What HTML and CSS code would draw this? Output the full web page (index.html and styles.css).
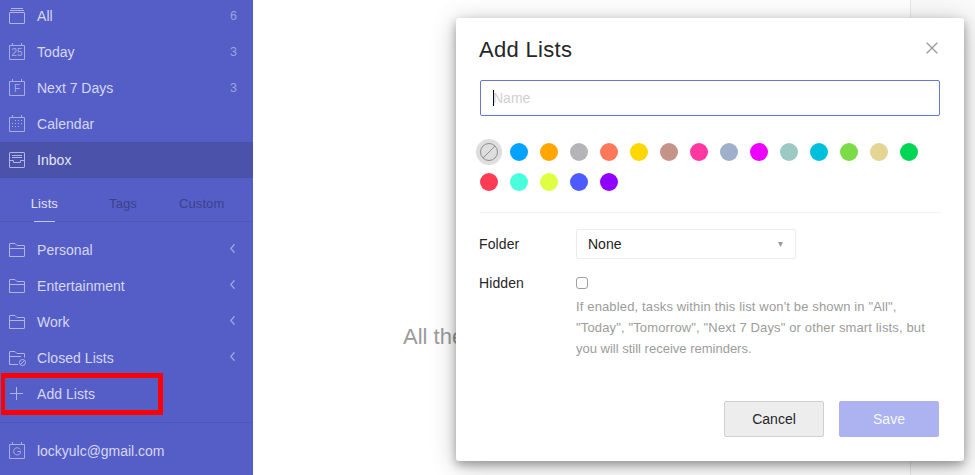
FILE: index.html
```html
<!DOCTYPE html>
<html lang="en">
<head>
<meta charset="utf-8">
<title>Lists</title>
<link rel="stylesheet" href="styles.css">
</head>
<body>
<svg class="defs" width="0" height="0">
  <symbol id="folder" viewBox="0 0 16 16"><path d="M.5 14.500V2q0-.5.5-.5h5l2 2h7q.5 0 .5.5v10q0 .5-.5.5H1q-.5 0-.5-.5M.5 6.500h15"/></symbol>
  <symbol id="cal" viewBox="0 0 16 17"><path d="M.5 2.500h15v14H.5zM3.500 0v2.500M12.500 0v2.500"/></symbol>
  <symbol id="chev" viewBox="0 0 5 9"><path d="M4.500.3.700 4.500l3.800 4.200"/></symbol>
</svg>
<div class="app">
  <aside class="sidebar">
    <nav class="smart">
      <a class="row"><svg class="icon" viewBox="0 0 16 16"><path d="M2 .5h12M1 2.500h14M1 4.500h14q.5 0 .5.5v10q0 .5-.5.5H1q-.5 0-.5-.5V5q0-.5.5-.5"/></svg><span class="label">All</span><span class="count">6</span></a>
      <a class="row"><span class="cal"><svg><use href="#cal"/></svg><b>25</b></span><span class="label">Today</span><span class="count">3</span></a>
      <a class="row"><span class="cal"><svg><use href="#cal"/></svg><b>F</b></span><span class="label next">Next 7 Days</span><span class="count">3</span></a>
      <a class="row"><span class="cal"><svg><use href="#cal"/><path class="dots" d="M6 5.500h8M3 8.500h11M3 11.500h8"/></svg></span><span class="label">Calendar</span></a>
      <a class="row active"><svg class="icon" viewBox="0 0 16 16"><path d="M1 .5h14q.5 0 .5.5v14q0 .5-.5.5H1q-.5 0-.5-.5V1Q.5.500 1 .5M3 3.500h10M3 5.500h10M.5 8.500H4.500v2h7v-2h4"/></svg><span class="label">Inbox</span></a>
    </nav>
    <div class="tabs"><span class="tab on">Lists</span><span class="tab">Tags</span><span class="tab">Custom</span></div>
    <nav class="lists">
      <a class="row"><svg class="icon"><use href="#folder"/></svg><span class="label">Personal</span><svg class="chev"><use href="#chev"/></svg></a>
      <a class="row"><svg class="icon"><use href="#folder"/></svg><span class="label">Entertainment</span><svg class="chev"><use href="#chev"/></svg></a>
      <a class="row"><svg class="icon"><use href="#folder"/></svg><span class="label">Work</span><svg class="chev"><use href="#chev"/></svg></a>
      <a class="row"><svg class="icon" viewBox="0 0 16 16"><path d="M9 14.500H.5V2q0-.5.5-.5h5l2 2h7q.5 0 .5.5v3.500M.5 6.500H12"/><circle cx="13.500" cy="12.500" r="3"/><path d="m11.500 14.500 4-4"/></svg><span class="label">Closed Lists</span><svg class="chev"><use href="#chev"/></svg></a>
      <a class="row add"><svg class="icon" viewBox="0 0 16 16"><path d="M1 7.500h13M7.500 1v13"/></svg><span class="label">Add Lists</span><i class="highlight"></i></a>
    </nav>
    <div class="account"><a class="row"><span class="cal"><svg><use href="#cal"/><path d="M11.300 7.500A3.600 3.600 0 1 0 11.500 10.800V9.500H8.500"/></svg></span><span class="label mail">lockyulc@gmail.com</span></a></div>
  </aside>
  <main class="main"><p class="empty">All the</p></main>
  <aside class="detail"></aside>
</div>
<section class="modal">
  <header class="head"><h1>Add Lists</h1><svg class="close" viewBox="0 0 12 12"><path d="m.7.700 10.600 10.600M11.300.7.700 11.300"/></svg></header>
  <div class="field"><i class="caret"></i><span>Name</span></div>
  <div class="colors">
    <i class="dot none"><svg viewBox="0 0 18 18"><circle cx="9" cy="9" r="8.500"/><path d="M3 15 15 3"/></svg></i>
    <i class="dot c1"></i><i class="dot c2"></i><i class="dot c3"></i><i class="dot c4"></i><i class="dot c5"></i><i class="dot c6"></i><i class="dot c7"></i><i class="dot c8"></i><i class="dot c9"></i><i class="dot c10"></i><i class="dot c11"></i><i class="dot c12"></i><i class="dot c13"></i><i class="dot c14"></i><i class="dot c15"></i><i class="dot c16"></i><i class="dot c17"></i><i class="dot c18"></i><i class="dot c19"></i>
  </div>
  <div class="form">
    <div class="name">Folder</div>
    <div class="select"><span>None</span><svg class="arrow" viewBox="0 0 5 5"><path d="M0 0h5L2.500 5z"/></svg></div>
    <div class="name hidden-name">Hidden</div>
    <div class="hidden-value"><i class="check"></i><p class="hint"><span class="wide">If enabled, tasks within this list won't be shown in "All",</span><br><span class="wide">"Today", "Tomorrow", "Next 7 Days" or other smart lists, but</span><br><span>you will still receive reminders.</span></p></div>
  </div>
  <footer class="actions"><button class="btn cancel">Cancel</button><button class="btn save">Save</button></footer>
</section>
</body>
</html>
```
FILE: styles.css
```css
* { box-sizing: border-box; }
html, body { height: 100%; overflow: hidden; }
body { margin: 0; font-family: "Liberation Sans", Arial, sans-serif; font-size: 14px; color: #262626; background: #fff; }
.defs { position: absolute; }
svg { fill: none; stroke: currentColor; stroke-width: 1; display: block; overflow: visible; flex: none; }

.app { display: flex; height: 475px; }
.sidebar { width: 253px; flex: none; background: #555ec7; color: #d5d8f1; overflow: hidden; }
.smart { margin-top: -2px; }
.row { display: flex; align-items: center; height: 36px; padding: 0 16px 0 9px; position: relative; }
.icon { width: 16px; height: 16px; margin-right: 12px; color: #b1b5e4; }
.cal { width: 16px; height: 17px; margin: 0 12px 1px 0; position: relative; color: #a8ade1; }
.cal svg { width: 16px; height: 17px; }
.cal b { position: absolute; left: 0; right: 0; top: 5px; text-align: center; font-weight: 400; font-size: 10px; line-height: 10px; }
.dots { stroke-dasharray: 1 2; }
.label { flex: 1; line-height: 20px; letter-spacing: .05px; }
.next { letter-spacing: 0; }
.mail { letter-spacing: -.02px; }
.count { font-size: 12.5px; color: #9ea3dd; }
.active { background: #4b52a9; color: #e3e5f5; }
.tabs { display: flex; height: 44px; padding: 0 12px 0 5px; border-bottom: 1px solid #4e56b8; font-size: 13px; color: #3b428c; }
.tab { width: 79px; text-align: center; line-height: 51px; letter-spacing: .1px; }
.on { color: #e0e2f5; position: relative; }
.on::after { content: ""; position: absolute; left: 29px; bottom: -1px; width: 21px; height: 1px; background: #c3c6ec; }
.lists { padding-top: 10px; height: 200px; }
.chev { width: 5px; height: 9px; color: #aaaee2; stroke-width: 1.2; margin: 0 2px 4px 0; }
.highlight { position: absolute; left: 1px; top: -3px; width: 162px; height: 42px; border: 5px solid #f00; border-left-width: 4px; }
.account { border-top: 1px solid #4e56b8; padding-top: 10px; }
.main { flex: 1; padding-left: 150px; }
.empty { margin: 323px 0 0; font-size: 22px; line-height: 27px; color: #9b9b9b; }
.detail { width: 65px; border-left: 1px solid #e8e8e8; background: #fafafa; }

.modal { position: absolute; left: 456px; top: 18px; width: 508px; height: 443px; padding: 0 24px; background: #fff; border-radius: 3px; box-shadow: 0 4px 10px rgba(0,0,0,.3), 0 4px 26px rgba(0,0,0,.24); }
.head { display: flex; justify-content: space-between; height: 62px; }
h1 { margin: 18px 0 0 -1px; font-size: 22px; line-height: 27px; font-weight: 400; letter-spacing: .3px; }
.close { width: 12px; height: 12px; margin: 24px 2px 0 0; color: #999; stroke-width: 1.3; }
.field { display: flex; align-items: center; width: 460px; height: 36px; border: 1px solid #6776dc; border-radius: 2px; padding-left: 12px; color: #d0d0d0; }
.caret { width: 1px; height: 16px; background: #000; margin-right: -1px; }
.colors { display: grid; grid-template-columns: repeat(15, 18px); gap: 12px; margin-top: 27px; height: 70px; width: 461px; border-bottom: 1px solid #f2f2f2; align-content: start; }
.dot { width: 18px; height: 18px; border-radius: 50%; }
.none { background: #dedede; box-shadow: 0 0 0 4px #dedede; color: #8f8f8f; }
.none svg { width: 18px; height: 18px; }
.c1 { background: #00a4ff; } .c2 { background: #ffa600; } .c3 { background: #b5b5b8; }
.c4 { background: #ff7859; } .c5 { background: #ffd700; } .c6 { background: #c49488; }
.c7 { background: #ff38a2; } .c8 { background: #9fafcc; } .c9 { background: #ee00ff; }
.c10 { background: #9bcac4; } .c11 { background: #00c0dc; } .c12 { background: #7cdc48; }
.c13 { background: #e5d593; } .c14 { background: #00d656; } .c15 { background: #ff3c54; }
.c16 { background: #4affdc; } .c17 { background: #deff42; } .c18 { background: #4c5aff; }
.c19 { background: #9000ff; }
.form { display: grid; grid-template-columns: 96px 1fr; margin-top: 16px; }
.name { line-height: 30px; margin-left: -1px; letter-spacing: .1px; }
.select { display: flex; justify-content: space-between; align-items: center; width: 220px; height: 30px; border: 1px solid #ececec; border-radius: 2px; padding: 0 12px 0 11px; color: #222; }
.arrow { width: 5px; height: 5px; fill: #999; stroke: none; }
.hidden-name { line-height: 16px; margin-top: 16px; }
.check { display: block; width: 12px; height: 12px; margin-top: 18px; border: 1px solid #a0a0a0; border-radius: 3px; }
.hint { margin: 7px 0 0; font-size: 13px; line-height: 21px; color: #9c9c9c; white-space: nowrap; }
.wide { letter-spacing: .14px; }
.actions { display: flex; justify-content: flex-end; gap: 15px; margin: 42px 1px 0 0; }
.btn { width: 100px; height: 36px; padding: 0; border: 1px solid #d0d0d0; border-radius: 2px; background: #ededed; color: #262626; font: inherit; }
.save { border-color: #acb3f0; background: #acb3f0; color: #f7f8ff; }
```
